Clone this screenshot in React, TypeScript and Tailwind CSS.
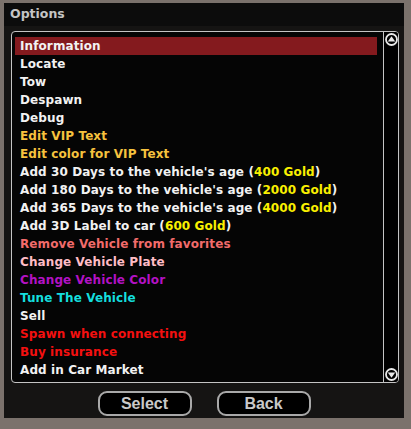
import React from "react";

type Seg = { t: string; c?: string };
type Item = { segs: Seg[]; c: string };

const W = "text-[#f2f2f2]";
const items: Item[] = [
  { segs: [{ t: "Information" }], c: W },
  { segs: [{ t: "Locate" }], c: W },
  { segs: [{ t: "Tow" }], c: W },
  { segs: [{ t: "Despawn" }], c: W },
  { segs: [{ t: "Debug" }], c: W },
  { segs: [{ t: "Edit VIP Text" }], c: "text-[#f6c23e]" },
  { segs: [{ t: "Edit color for VIP Text" }], c: "text-[#f6c23e]" },
  { segs: [{ t: "Add 30 Days to the vehicle's age (" }, { t: "400 Gold", c: "text-[#faf000]" }, { t: ")" }], c: W },
  { segs: [{ t: "Add 180 Days to the vehicle's age (" }, { t: "2000 Gold", c: "text-[#faf000]" }, { t: ")" }], c: W },
  { segs: [{ t: "Add 365 Days to the vehicle's age (" }, { t: "4000 Gold", c: "text-[#faf000]" }, { t: ")" }], c: W },
  { segs: [{ t: "Add 3D Label to car (" }, { t: "600 Gold", c: "text-[#faf000]" }, { t: ")" }], c: W },
  { segs: [{ t: "Remove Vehicle from favorites" }], c: "text-[#f26b6b]" },
  { segs: [{ t: "Change Vehicle Plate" }], c: "text-[#ffbcc6]" },
  { segs: [{ t: "Change Vehicle Color" }], c: "text-[#b312c4]" },
  { segs: [{ t: "Tune The Vehicle" }], c: "text-[#14dede]" },
  { segs: [{ t: "Sell" }], c: W },
  { segs: [{ t: "Spawn when connecting" }], c: "text-[#f41010]" },
  { segs: [{ t: "Buy insurance" }], c: "text-[#f41010]" },
  { segs: [{ t: "Add in Car Market" }], c: W },
];

function Arrow({ down }: { down?: boolean }) {
  return (
    <svg width="13" height="13" viewBox="0 0 13 13" className="block">
      <circle cx="6.5" cy="6.5" r="5.5" fill="#000" stroke="#e8e8e8" strokeWidth="1.8" />
      {down ? (
        <polygon points="2.8,4.6 10.2,4.6 6.5,9.8" fill="#e8e8e8" />
      ) : (
        <polygon points="2.8,8.4 10.2,8.4 6.5,3.2" fill="#e8e8e8" />
      )}
    </svg>
  );
}

export default function App() {
  return (
    <div
      className="w-[411px] h-[429px] bg-[#7b726c] pt-[3px] pl-[4px] overflow-hidden"
      style={{ fontFamily: '"DejaVu Sans", sans-serif' }}
    >
      <div className="w-[400px] h-[415px] bg-[#151413] flex flex-col">
        <div className="h-[23px] bg-[#0c0c0c] flex items-center pl-[6px] text-[12.5px] font-bold text-[#c4c4c4]">
          Options
        </div>
        <div className="pl-[7px] pr-[5px] pt-[5px]">
          <div className="h-[352px] flex border-[1.5px] border-[#c4c4c4] rounded-[4px] bg-[#050505] overflow-hidden">
            <div className="flex-1 pt-[5px] pl-[3px] pr-[6px]">
              {items.map((it, i) => (
                <div
                  key={i}
                  className={`h-[18px] flex items-center pl-[5px] text-[12px] font-bold whitespace-nowrap leading-none tracking-[0.1px] ${it.c} ${
                    i === 0 ? "bg-[#841a1e]" : ""
                  }`}
                >
                  {it.segs.map((s, j) => (
                    <span key={j} className={s.c ?? ""}>
                      {s.t}
                    </span>
                  ))}
                </div>
              ))}
            </div>
            <div className="w-[15px] border-l-[1.5px] border-[#c4c4c4] bg-black flex flex-col justify-between items-center py-[1px]">
              <Arrow />
              <Arrow down />
            </div>
          </div>
        </div>
        <div className="flex justify-center gap-[25px] mt-[8px]">
          {["Select", "Back"].map((b) => (
            <div
              key={b}
              className="w-[94px] h-[25px] rounded-[9px] border-2 border-[#a9a9a9] bg-black flex items-center justify-center text-[16px] font-bold text-[#c9c9c9]"
              style={{ fontFamily: '"Liberation Sans", Arial, sans-serif' }}
            >
              {b}
            </div>
          ))}
        </div>
      </div>
    </div>
  );
}
